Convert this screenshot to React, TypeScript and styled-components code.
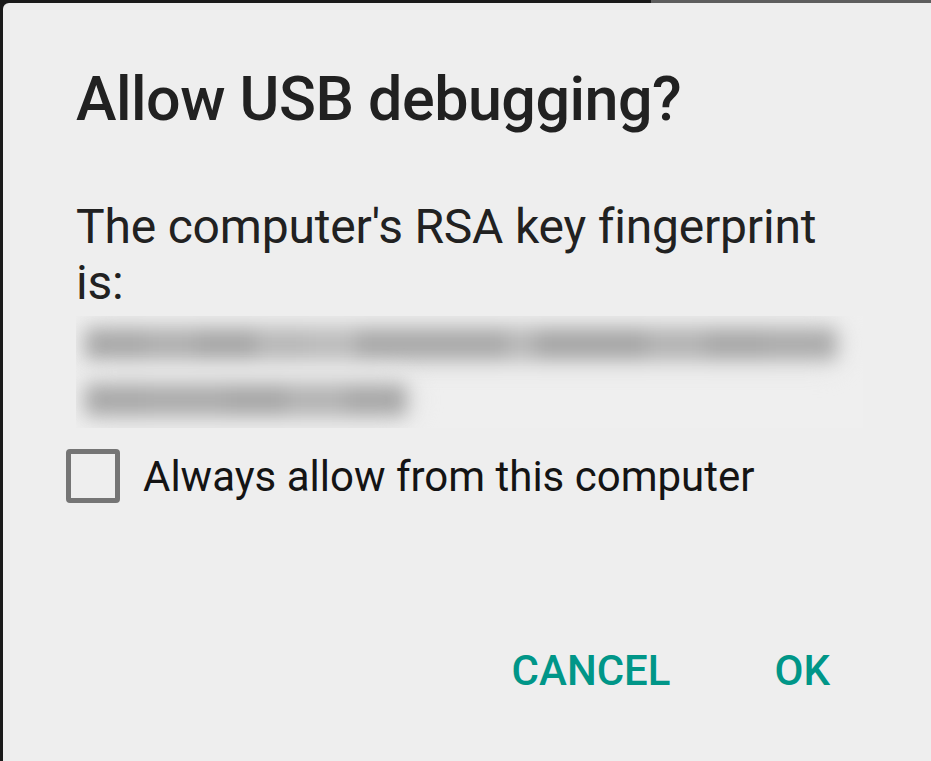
import React, { useState } from "react";
import styled, { createGlobalStyle } from "styled-components";

const GlobalStyle = createGlobalStyle`
  html, body {
    margin: 0;
    padding: 0;
    height: 100%;
    overflow: hidden;
  }
  body {
    background: linear-gradient(to right, #1a1a1a 651px, #5e5e5e 651px);
    font-family: Roboto, "Liberation Sans", sans-serif;
  }
  #root {
    height: 100%;
  }
`;

const Screen = styled.div`
  height: 100%;
  padding: 3px 0 0 3px;
  box-sizing: border-box;
  display: flex;
`;

const Dialog = styled.div`
  flex: 1;
  background: #eeeeee;
  border-top-left-radius: 6px;
  padding: 60px 0 0 73px;
  display: flex;
  flex-direction: column;
`;

const Title = styled.h1`
  margin: 0;
  font-size: 61px;
  line-height: 72px;
  letter-spacing: -0.5px;
  font-weight: 500;
  color: #212121;
`;

const Message = styled.p`
  margin: 64px 0 0;
  font-size: 48px;
  line-height: 56px;
  letter-spacing: -0.2px;
  font-weight: 400;
  color: #212121;
  width: 790px;
`;

// blurred-out key, drawn as soft smears
const Fingerprint = styled.div`
  margin-top: 5px;
  width: 787px;
  height: 112px;
  background: #efefef;
  overflow: hidden;
  display: flex;
  flex-direction: column;
`;

const BlurLine = styled.div`
  height: 56px;
  display: flex;
  align-items: center;
  padding-left: 10px;
`;

const Smear = styled.div`
  display: flex;
  border-radius: 14px;
  box-shadow: 0 0 14px 10px #e0e0e0;
  background: #e0e0e0;
  filter: blur(9px);
`;

const Smudge = styled.div<{ $w: number; $tone: string }>`
  width: ${(p) => p.$w}px;
  height: 30px;
  background: ${(p) => p.$tone};
`;

const CheckRow = styled.label`
  margin: 19px 0 0 -10px;
  display: flex;
  align-items: center;
  gap: 23px;
  cursor: pointer;
`;

const Box = styled.span<{ $on: boolean }>`
  width: 54px;
  height: 54px;
  box-sizing: border-box;
  border: 5px solid ${(p) => (p.$on ? "#009688" : "#757575")};
  background: ${(p) => (p.$on ? "#009688" : "transparent")};
  border-radius: 4px;
  flex-shrink: 0;
`;

const CheckText = styled.span`
  font-size: 42px;
  line-height: 54px;
  color: #141414;
  padding-top: 3px;
`;

const Buttons = styled.div`
  margin-top: 142px;
  display: flex;
  justify-content: flex-end;
  gap: 52px;
  padding-right: 75px;
`;

const TextButton = styled.button`
  border: none;
  background: none;
  padding: 0 26px;
  font-family: Roboto, "Liberation Sans", sans-serif;
  font-size: 42px;
  line-height: 50px;
  font-weight: 500;
  color: #009688;
  cursor: pointer;
`;

const smudges = [
  [
    { w: 60, tone: "#a9a9a9" },
    { w: 50, tone: "#b0b0b0" },
    { w: 60, tone: "#a7a7a7" },
    { w: 50, tone: "#b8b8b8" },
    { w: 50, tone: "#bcbcbc" },
    { w: 150, tone: "#a9a9a9" },
    { w: 30, tone: "#b8b8b8" },
    { w: 110, tone: "#a6a6a6" },
    { w: 60, tone: "#b3b3b3" },
    { w: 60, tone: "#a8a8a8" },
    { w: 70, tone: "#acacac" },
  ],
  [
    { w: 60, tone: "#a9a9a9" },
    { w: 80, tone: "#acacac" },
    { w: 60, tone: "#a7a7a7" },
    { w: 60, tone: "#b3b3b3" },
    { w: 60, tone: "#a8a8a8" },
  ],
];

export default function App() {
  const [always, setAlways] = useState(false);

  return (
    <>
      <GlobalStyle />
      <Screen>
        <Dialog>
          <Title>Allow USB debugging?</Title>
          <Message>The computer's RSA key fingerprint is:</Message>
          <Fingerprint>
            {smudges.map((line, i) => (
              <BlurLine key={i}>
                <Smear>
                  {line.map((s, j) => (
                    <Smudge key={j} $w={s.w} $tone={s.tone} />
                  ))}
                </Smear>
              </BlurLine>
            ))}
          </Fingerprint>
          <CheckRow onClick={() => setAlways((v) => !v)}>
            <Box $on={always} />
            <CheckText>Always allow from this computer</CheckText>
          </CheckRow>
          <Buttons>
            <TextButton>CANCEL</TextButton>
            <TextButton>OK</TextButton>
          </Buttons>
        </Dialog>
      </Screen>
    </>
  );
}
